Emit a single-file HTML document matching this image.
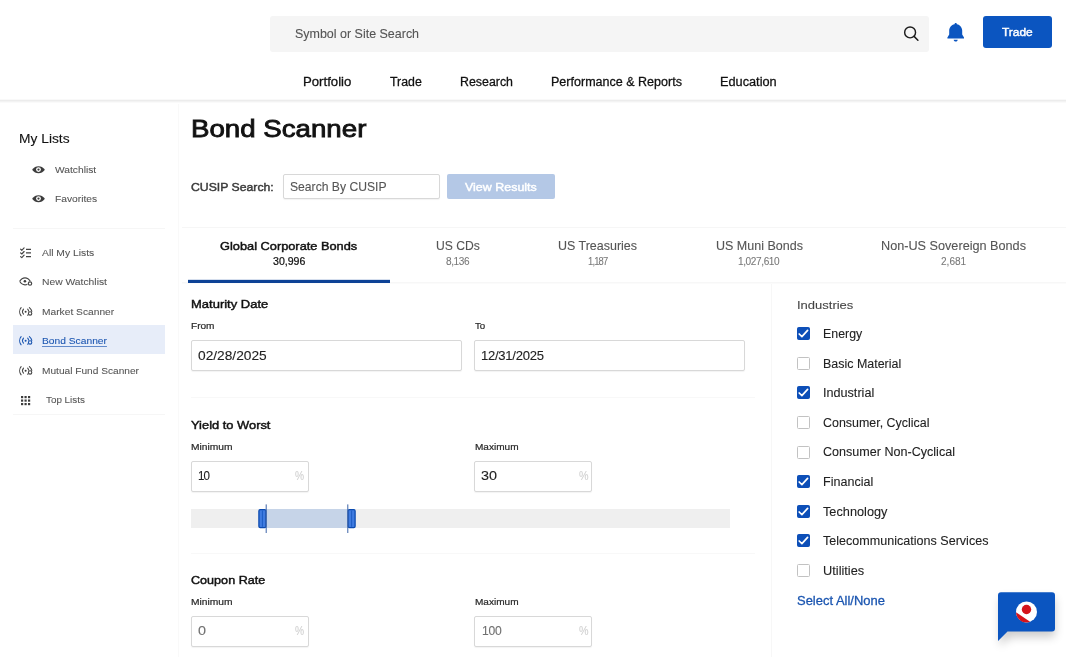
<!DOCTYPE html>
<html lang="en">
<head>
<meta charset="utf-8">
<title>Bond Scanner</title>
<style>
*{box-sizing:border-box;margin:0;padding:0}
html,body{width:1066px;height:657px;overflow:hidden;background:#fff}
body{font-family:"Liberation Sans",sans-serif;color:#111;position:relative}
.a{position:absolute}
.t{position:absolute;white-space:nowrap;line-height:1;transform-origin:0 50%}
svg{position:absolute;overflow:visible}
/* header */
#hdr{left:0;top:99px;width:1066px;height:4px;background:linear-gradient(#f9f9f9 0 25%,#ececec 25% 50%,#f3f3f3 50% 75%,#fafafa 75% 100%)}
#sbar{left:270px;top:16px;width:659px;height:36px;background:#f5f5f5;border-radius:3px}
#tradebtn{left:983px;top:16px;width:69px;height:32px;background:#0b55c0;border-radius:3px}
/* sidebar */
#side{left:0;top:104px;width:179px;height:553px;border-right:1px solid #f9f9f9}
#sel{left:13px;top:325px;width:152px;height:29px;background:#e7edf9}
.sd{left:13px;width:152px;height:1px;background:#f6f6f6}
/* main */
.inp{background:#fff;border:1px solid #d8d8d8;border-radius:2px;box-shadow:0 1px 1px rgba(0,0,0,.05)}
.hr{height:1px;background:#f8f8f8}
.cb{left:797px;width:13px;height:13px;border:1px solid #c2c2c2;border-radius:1.5px;background:#fff}
.cb.on{background:#0d4fb8;border-color:#0d4fb8}
.cb svg{left:-1px;top:-1px}
</style>
</head>
<body>
<!-- HEADER -->
<div class="a" id="hdr"></div>
<div class="a" id="sbar"></div>
<div class="a" id="tradebtn"></div>
<!-- search icon -->
<svg style="left:902px;top:24px" width="20" height="20" viewBox="0 0 20 20"><circle cx="8.1" cy="8.4" r="5.45" fill="none" stroke="#1c1c1c" stroke-width="1.45"/><path d="M12.1 12.4 L15.9 16.2" stroke="#1c1c1c" stroke-width="1.5" stroke-linecap="round"/></svg>
<!-- bell -->
<svg style="left:946px;top:22px" width="20" height="20" viewBox="0 0 20 20"><path d="M9.7 0.9 C10.5 0.9 10.9 1.5 10.9 2.2 C14 2.9 16.2 5.4 16.2 8.6 V12.6 L18 15.4 V16.5 H1.4 V15.4 L3.2 12.6 V8.6 C3.2 5.4 5.4 2.9 8.5 2.2 C8.5 1.5 8.9 0.9 9.7 0.9 Z" fill="#0b55c0"/><path d="M7.7 17.7 H11.7 C11.7 18.8 10.8 19.5 9.7 19.5 C8.6 19.5 7.7 18.8 7.7 17.7 Z" fill="#0b55c0"/></svg>

<!-- SIDEBAR -->
<div class="a" id="side"></div>
<div class="a sd" style="top:228px"></div>
<div class="a" id="sel"></div>
<div class="a sd" style="top:414px"></div>

<!-- eye (filled) x2 -->
<svg style="left:32px;top:165.6px" width="13" height="7.4" viewBox="0 0 13 7.4"><path d="M0.1 3.7 C1.9 1.2 4 0.2 6.5 0.2 C9 0.2 11.1 1.2 12.9 3.7 C11.1 6.2 9 7.2 6.5 7.2 C4 7.2 1.9 6.2 0.1 3.7 Z" fill="#3c3c3c"/><circle cx="6.5" cy="3.6" r="2.45" fill="#fff"/><circle cx="6.5" cy="3.6" r="1.15" fill="#3c3c3c"/></svg>
<svg style="left:32px;top:195.2px" width="13" height="7.4" viewBox="0 0 13 7.4"><path d="M0.1 3.7 C1.9 1.2 4 0.2 6.5 0.2 C9 0.2 11.1 1.2 12.9 3.7 C11.1 6.2 9 7.2 6.5 7.2 C4 7.2 1.9 6.2 0.1 3.7 Z" fill="#3c3c3c"/><circle cx="6.5" cy="3.6" r="2.45" fill="#fff"/><circle cx="6.5" cy="3.6" r="1.15" fill="#3c3c3c"/></svg>
<!-- checklist -->
<svg style="left:20px;top:247px" width="12" height="12" viewBox="0 0 12 12" fill="none" stroke="#444" stroke-width="1.15" stroke-linecap="round" stroke-linejoin="round"><path d="M0.6 2.2 L1.8 3.3 L4.1 0.8 M0.6 5.9 L1.8 7 L4.1 4.5 M0.6 9.6 L1.8 10.7 L4.1 8.2"/><path d="M6 2.3 H11 M6 5.9 H11 M6 9.6 H11" stroke-width="1.3" stroke-linecap="butt"/></svg>
<!-- eye with dot -->
<svg style="left:19px;top:277px" width="14" height="9" viewBox="0 0 14 9" fill="none" stroke="#444" stroke-width="1.15"><path d="M0.7 4.3 C2 2 3.9 0.8 6 0.8 C8.1 0.8 10 2 11.3 4.3 M0.7 4.3 C2 6.6 3.9 7.8 6 7.8 C6.9 7.8 7.7 7.6 8.4 7.2"/><circle cx="5.9" cy="4.3" r="1.3" fill="#3c3c3c" stroke="none"/><circle cx="11" cy="6.5" r="1.7" fill="#fff"/></svg>
<!-- scanner icons -->
<svg style="left:19px;top:306.6px" width="14" height="9.4" viewBox="0 0 14 9.4" fill="none" stroke="#444" stroke-width="1.1" stroke-linecap="round"><path d="M2.1 0.6 C0.2 2.9 0.2 6.5 2.1 8.8 M4.5 2.2 C3.3 3.6 3.3 5.8 4.5 7.2 M8.7 2.2 C9.3 2.9 9.6 3.6 9.7 4.3 M10.4 0.6 C11.8 1.8 12.6 3.1 12.8 4.4 M9 7.8 C8.9 8 8.8 8.1 8.7 8.3"/><circle cx="6.6" cy="4.7" r="1" fill="#3c3c3c" stroke="none"/><circle cx="11.1" cy="6.4" r="1.7" fill="#fff"/></svg>
<svg style="left:19px;top:336.1px" width="14" height="9.4" viewBox="0 0 14 9.4" fill="none" stroke="#1a55b0" stroke-width="1.1" stroke-linecap="round"><path d="M2.1 0.6 C0.2 2.9 0.2 6.5 2.1 8.8 M4.5 2.2 C3.3 3.6 3.3 5.8 4.5 7.2 M8.7 2.2 C9.3 2.9 9.6 3.6 9.7 4.3 M10.4 0.6 C11.8 1.8 12.6 3.1 12.8 4.4 M9 7.8 C8.9 8 8.8 8.1 8.7 8.3"/><circle cx="6.6" cy="4.7" r="1" fill="#1a55b0" stroke="none"/><circle cx="11.1" cy="6.4" r="1.7" fill="#e7edf9"/></svg>
<svg style="left:19px;top:365.7px" width="14" height="9.4" viewBox="0 0 14 9.4" fill="none" stroke="#444" stroke-width="1.1" stroke-linecap="round"><path d="M2.1 0.6 C0.2 2.9 0.2 6.5 2.1 8.8 M4.5 2.2 C3.3 3.6 3.3 5.8 4.5 7.2 M8.7 2.2 C9.3 2.9 9.6 3.6 9.7 4.3 M10.4 0.6 C11.8 1.8 12.6 3.1 12.8 4.4 M9 7.8 C8.9 8 8.8 8.1 8.7 8.3"/><circle cx="6.6" cy="4.7" r="1" fill="#3c3c3c" stroke="none"/><circle cx="11.1" cy="6.4" r="1.7" fill="#fff"/></svg>
<!-- grid -->
<svg style="left:21.2px;top:395.6px" width="9.2" height="9.2" viewBox="0 0 9.2 9.2" fill="#3c3c3c"><rect x="0" y="0" width="2.2" height="2.2"/><rect x="3.5" y="0" width="2.2" height="2.2"/><rect x="7" y="0" width="2.2" height="2.2"/><rect x="0" y="3.5" width="2.2" height="2.2"/><rect x="3.5" y="3.5" width="2.2" height="2.2"/><rect x="7" y="3.5" width="2.2" height="2.2"/><rect x="0" y="7" width="2.2" height="2.2"/><rect x="3.5" y="7" width="2.2" height="2.2"/><rect x="7" y="7" width="2.2" height="2.2"/></svg>


<!-- MAIN -->
<div class="a inp" style="left:283px;top:174px;width:157px;height:25px"></div>
<div class="a" id="vbtn" style="left:447px;top:174px;width:108px;height:25px;background:#b4c8e6;border-radius:2px"></div>

<!-- tabs -->
<div class="a hr" style="left:182px;top:227px;width:884px;background:#f6f6f6"></div>
<div class="a hr" style="left:182px;top:282px;width:884px;height:2px;background:linear-gradient(#f7f7f7 50%,#fbfbfb 50%)"></div>
<div class="a" style="left:188px;top:280px;width:202px;height:3px;background:#0d4296;box-shadow:0 -0.5px 0 rgba(13,66,150,.35)"></div>
<div class="a" style="left:771px;top:284px;width:1px;height:373px;background:#f7f7f7"></div>

<!-- form -->
<div class="a inp" style="left:191px;top:340px;width:271px;height:31px"></div>
<div class="a inp" style="left:474px;top:340px;width:271px;height:31px"></div>
<div class="a hr" style="left:191px;top:396.5px;width:564px"></div>
<div class="a inp" style="left:191px;top:460.5px;width:118px;height:31px"></div>
<div class="a inp" style="left:474px;top:460.5px;width:118px;height:31px"></div>
<!-- slider -->
<div class="a" style="left:191px;top:509px;width:539px;height:19px;background:#efefef"></div>
<div class="a" style="left:266px;top:509px;width:82px;height:19px;background:#c6d4e8"></div>
<svg style="left:255px;top:500px" width="110" height="40" viewBox="0 0 110 40">
<rect x="3.9" y="9.6" width="7" height="18" rx="1.3" fill="#3f7be0" stroke="#0c4bb0" stroke-width="1.3"/>
<path d="M7.4 10.5 V26.8" stroke="#1d5cc4" stroke-width="1"/>
<path d="M11.2 4.4 V33" stroke="#3d64a8" stroke-width="1"/>
<rect x="93.1" y="9.6" width="7" height="18" rx="1.3" fill="#3f7be0" stroke="#0c4bb0" stroke-width="1.3"/>
<path d="M96.6 10.5 V26.8" stroke="#1d5cc4" stroke-width="1"/>
<path d="M92.8 4.4 V33" stroke="#3d64a8" stroke-width="1"/>
</svg>
<div class="a hr" style="left:191px;top:552.5px;width:564px"></div>
<div class="a inp" style="left:191px;top:615.5px;width:118px;height:31px"></div>
<div class="a inp" style="left:474px;top:615.5px;width:118px;height:31px"></div>

<div class="a cb on" style="top:327.1px"><svg width="13" height="13" viewBox="0 0 13 13"><path d="M2.2 7.0 L4.9 9.6 L10.6 3.4" fill="none" stroke="#fff" stroke-width="1.7" stroke-linecap="round" stroke-linejoin="round"/></svg></div>
<div class="a cb" style="top:356.7px"></div>
<div class="a cb on" style="top:386.3px"><svg width="13" height="13" viewBox="0 0 13 13"><path d="M2.2 7.0 L4.9 9.6 L10.6 3.4" fill="none" stroke="#fff" stroke-width="1.7" stroke-linecap="round" stroke-linejoin="round"/></svg></div>
<div class="a cb" style="top:415.9px"></div>
<div class="a cb" style="top:445.5px"></div>
<div class="a cb on" style="top:475.1px"><svg width="13" height="13" viewBox="0 0 13 13"><path d="M2.2 7.0 L4.9 9.6 L10.6 3.4" fill="none" stroke="#fff" stroke-width="1.7" stroke-linecap="round" stroke-linejoin="round"/></svg></div>
<div class="a cb on" style="top:504.7px"><svg width="13" height="13" viewBox="0 0 13 13"><path d="M2.2 7.0 L4.9 9.6 L10.6 3.4" fill="none" stroke="#fff" stroke-width="1.7" stroke-linecap="round" stroke-linejoin="round"/></svg></div>
<div class="a cb on" style="top:534.3px"><svg width="13" height="13" viewBox="0 0 13 13"><path d="M2.2 7.0 L4.9 9.6 L10.6 3.4" fill="none" stroke="#fff" stroke-width="1.7" stroke-linecap="round" stroke-linejoin="round"/></svg></div>
<div class="a cb" style="top:563.9px"></div>

<div class="t" id="stext" style="left:295px;top:28px;font-size:12.15px;color:#555;-webkit-text-stroke:0.10px #555;transform:scaleX(1.0270);">Symbol or Site Search</div>
<div class="t" id="tbtxt" style="left:1002px;top:26px;font-size:11.68px;color:#fff;-webkit-text-stroke:0.44px #fff;transform:scaleX(1.0230);">Trade</div>
<div class="t" id="n0" style="left:303px;top:76px;font-size:12.01px;color:#111;-webkit-text-stroke:0.26px #111;transform:scaleX(1.0973);">Portfolio</div>
<div class="t" id="n1" style="left:390px;top:76px;font-size:12.01px;color:#111;-webkit-text-stroke:0.26px #111;transform:scaleX(1.0275);">Trade</div>
<div class="t" id="n2" style="left:460px;top:76px;font-size:12.01px;color:#111;-webkit-text-stroke:0.26px #111;transform:scaleX(1.0311);">Research</div>
<div class="t" id="n3" style="left:551px;top:76px;font-size:12.01px;color:#111;-webkit-text-stroke:0.26px #111;transform:scaleX(1.0444);">Performance &amp; Reports</div>
<div class="t" id="n4" style="left:720px;top:76px;font-size:12.01px;color:#111;-webkit-text-stroke:0.26px #111;transform:scaleX(1.0616);">Education</div>
<div class="t" id="mylists" style="left:19px;top:133px;font-size:12.85px;color:#111;-webkit-text-stroke:0.10px #111;transform:scaleX(1.0744);">My Lists</div>
<div class="t" id="s1" style="left:55px;top:165px;font-size:9.92px;color:#555;-webkit-text-stroke:0.08px #555;transform:scaleX(1.0344);">Watchlist</div>
<div class="t" id="s2" style="left:55px;top:194px;font-size:9.92px;color:#555;-webkit-text-stroke:0.08px #555;transform:scaleX(1.0356);">Favorites</div>
<div class="t" id="s3" style="left:42px;top:248px;font-size:9.92px;color:#555;-webkit-text-stroke:0.08px #555;transform:scaleX(1.0422);">All My Lists</div>
<div class="t" id="s4" style="left:42px;top:277px;font-size:9.92px;color:#555;-webkit-text-stroke:0.08px #555;transform:scaleX(1.0410);">New Watchlist</div>
<div class="t" id="s5" style="left:42px;top:307px;font-size:9.92px;color:#555;-webkit-text-stroke:0.08px #555;transform:scaleX(1.0324);">Market Scanner</div>
<div class="t" id="s6" style="left:42px;top:336px;font-size:9.92px;color:#1a55b0;-webkit-text-stroke:0.08px #1a55b0;transform:scaleX(1.0343);text-decoration:underline;text-underline-offset:1.5px;text-decoration-thickness:1px;text-decoration-color:rgba(26,85,176,.65);">Bond Scanner</div>
<div class="t" id="s7" style="left:42px;top:366px;font-size:9.92px;color:#555;-webkit-text-stroke:0.08px #555;transform:scaleX(1.0236);">Mutual Fund Scanner</div>
<div class="t" id="s8" style="left:46px;top:395px;font-size:9.92px;color:#555;-webkit-text-stroke:0.08px #555;transform:scaleX(0.9938);">Top Lists</div>
<div class="t" id="title" style="left:191px;top:117px;font-size:24.73px;color:#111;-webkit-text-stroke:0.89px #111;transform:scaleX(1.1192);">Bond Scanner</div>
<div class="t" id="cusip" style="left:191px;top:181px;font-size:11.68px;color:#3a3a3a;-webkit-text-stroke:0.44px #3a3a3a;transform:scaleX(1.0484);">CUSIP Search:</div>
<div class="t" id="cph" style="left:290px;top:181px;font-size:12.11px;color:#555;-webkit-text-stroke:0.10px #555;transform:scaleX(1.0032);">Search By CUSIP</div>
<div class="t" id="vtxt" style="left:465px;top:181px;font-size:11.68px;color:#fff;-webkit-text-stroke:0.44px #fff;transform:scaleX(1.0677);">View Results</div>
<div class="t" id="tb0" style="left:220px;top:240px;font-size:11.68px;color:#111;-webkit-text-stroke:0.44px #111;transform:scaleX(1.0960);">Global Corporate Bonds</div>
<div class="t" id="tc0" style="left:273px;top:257px;font-size:10.06px;color:#111;-webkit-text-stroke:0.22px #111;transform:scaleX(1.0527);">30,996</div>
<div class="t" id="tb1" style="left:436px;top:240px;font-size:12.11px;color:#555;-webkit-text-stroke:0.10px #555;transform:scaleX(1.0017);">US CDs</div>
<div class="t" id="tc1" style="left:446px;top:257px;font-size:10.06px;color:#777;-webkit-text-stroke:0.08px #777;transform:scaleX(0.9998);letter-spacing:-0.40px;">8,136</div>
<div class="t" id="tb2" style="left:558px;top:240px;font-size:12.11px;color:#555;-webkit-text-stroke:0.10px #555;transform:scaleX(1.0299);">US Treasuries</div>
<div class="t" id="tc2" style="left:588px;top:257px;font-size:10.06px;color:#777;-webkit-text-stroke:0.08px #777;transform:scaleX(0.9368);letter-spacing:-0.90px;">1,187</div>
<div class="t" id="tb3" style="left:716px;top:240px;font-size:12.11px;color:#555;-webkit-text-stroke:0.10px #555;transform:scaleX(1.0334);">US Muni Bonds</div>
<div class="t" id="tc3" style="left:738px;top:257px;font-size:10.06px;color:#777;-webkit-text-stroke:0.08px #777;transform:scaleX(1.0046);letter-spacing:-0.40px;">1,027,610</div>
<div class="t" id="tb4" style="left:881px;top:240px;font-size:12.11px;color:#555;-webkit-text-stroke:0.10px #555;transform:scaleX(1.0457);">Non-US Sovereign Bonds</div>
<div class="t" id="tc4" style="left:941px;top:257px;font-size:10.06px;color:#777;-webkit-text-stroke:0.08px #777;transform:scaleX(1.0027);letter-spacing:0.00px;">2,681</div>
<div class="t" id="md" style="left:191px;top:299px;font-size:11.32px;color:#111;-webkit-text-stroke:0.43px #111;transform:scaleX(1.1482);">Maturity Date</div>
<div class="t" id="from" style="left:191px;top:321px;font-size:9.64px;color:#2a2a2a;-webkit-text-stroke:0.21px #2a2a2a;transform:scaleX(1.0469);">From</div>
<div class="t" id="to" style="left:475px;top:321px;font-size:9.64px;color:#2a2a2a;-webkit-text-stroke:0.21px #2a2a2a;transform:scaleX(1.0087);">To</div>
<div class="t" id="d1" style="left:198px;top:350px;font-size:12.11px;color:#222;-webkit-text-stroke:0.10px #222;transform:scaleX(1.1336);">02/28/2025</div>
<div class="t" id="d2" style="left:481px;top:350px;font-size:12.11px;color:#222;-webkit-text-stroke:0.10px #222;transform:scaleX(1.0791);letter-spacing:-0.25px;">12/31/2025</div>
<div class="t" id="ytw" style="left:191px;top:420px;font-size:11.32px;color:#111;-webkit-text-stroke:0.43px #111;transform:scaleX(1.1383);">Yield to Worst</div>
<div class="t" id="min1" style="left:191px;top:442px;font-size:9.64px;color:#2a2a2a;-webkit-text-stroke:0.21px #2a2a2a;transform:scaleX(1.0630);">Minimum</div>
<div class="t" id="max1" style="left:475px;top:442px;font-size:9.64px;color:#2a2a2a;-webkit-text-stroke:0.21px #2a2a2a;transform:scaleX(1.0441);">Maximum</div>
<div class="t" id="v10" style="left:198px;top:470px;font-size:12.11px;color:#222;-webkit-text-stroke:0.10px #222;transform:scaleX(0.9557);letter-spacing:-0.9px;">10</div>
<div class="t" id="v30" style="left:481px;top:470px;font-size:12.11px;color:#222;-webkit-text-stroke:0.10px #222;transform:scaleX(1.1864);">30</div>
<div class="t" id="p1" style="left:295px;top:470px;font-size:12.11px;color:#d0d0d0;-webkit-text-stroke:0.10px #d0d0d0;transform:scaleX(0.8454);">%</div>
<div class="t" id="p2" style="left:579px;top:470px;font-size:12.11px;color:#d0d0d0;-webkit-text-stroke:0.10px #d0d0d0;transform:scaleX(0.8875);">%</div>
<div class="t" id="cr" style="left:191px;top:575px;font-size:11.32px;color:#111;-webkit-text-stroke:0.43px #111;transform:scaleX(1.1137);">Coupon Rate</div>
<div class="t" id="min2" style="left:191px;top:597px;font-size:9.64px;color:#2a2a2a;-webkit-text-stroke:0.21px #2a2a2a;transform:scaleX(1.0630);">Minimum</div>
<div class="t" id="max2" style="left:475px;top:597px;font-size:9.64px;color:#2a2a2a;-webkit-text-stroke:0.21px #2a2a2a;transform:scaleX(1.0441);">Maximum</div>
<div class="t" id="v0" style="left:198px;top:625px;font-size:12.11px;color:#707070;-webkit-text-stroke:0.10px #707070;transform:scaleX(1.1861);">0</div>
<div class="t" id="v100" style="left:482px;top:625px;font-size:12.11px;color:#707070;-webkit-text-stroke:0.10px #707070;transform:scaleX(1.0019);letter-spacing:-0.3px;">100</div>
<div class="t" id="p3" style="left:295px;top:625px;font-size:12.11px;color:#d0d0d0;-webkit-text-stroke:0.10px #d0d0d0;transform:scaleX(0.8454);">%</div>
<div class="t" id="p4" style="left:579px;top:625px;font-size:12.11px;color:#d0d0d0;-webkit-text-stroke:0.10px #d0d0d0;transform:scaleX(0.8875);">%</div>
<div class="t" id="ind" style="left:797px;top:299px;font-size:11.73px;color:#444;-webkit-text-stroke:0.09px #444;transform:scaleX(1.1091);">Industries</div>
<div class="t" id="i0" style="left:823px;top:329px;font-size:11.87px;color:#222;-webkit-text-stroke:0.09px #222;transform:scaleX(1.0432);">Energy</div>
<div class="t" id="i1" style="left:823px;top:359px;font-size:11.87px;color:#222;-webkit-text-stroke:0.09px #222;transform:scaleX(1.0500);">Basic Material</div>
<div class="t" id="i2" style="left:823px;top:388px;font-size:11.87px;color:#222;-webkit-text-stroke:0.09px #222;transform:scaleX(1.0642);">Industrial</div>
<div class="t" id="i3" style="left:823px;top:418px;font-size:11.87px;color:#222;-webkit-text-stroke:0.09px #222;transform:scaleX(1.0488);">Consumer, Cyclical</div>
<div class="t" id="i4" style="left:823px;top:447px;font-size:11.87px;color:#222;-webkit-text-stroke:0.09px #222;transform:scaleX(1.0594);">Consumer Non-Cyclical</div>
<div class="t" id="i5" style="left:823px;top:477px;font-size:11.87px;color:#222;-webkit-text-stroke:0.09px #222;transform:scaleX(1.0578);">Financial</div>
<div class="t" id="i6" style="left:823px;top:507px;font-size:11.87px;color:#222;-webkit-text-stroke:0.09px #222;transform:scaleX(1.0742);">Technology</div>
<div class="t" id="i7" style="left:823px;top:536px;font-size:11.87px;color:#222;-webkit-text-stroke:0.09px #222;transform:scaleX(1.0591);">Telecommunications Services</div>
<div class="t" id="i8" style="left:823px;top:566px;font-size:11.87px;color:#222;-webkit-text-stroke:0.09px #222;transform:scaleX(1.0783);">Utilities</div>
<div class="t" id="selall" style="left:797px;top:596px;font-size:11.87px;color:#1a55b0;-webkit-text-stroke:0.26px #1a55b0;transform:scaleX(1.0934);">Select All/None</div>

<!-- chat widget -->
<svg style="left:980px;top:580px" width="86" height="77" viewBox="0 0 86 77">
<defs><filter id="sh" x="-30%" y="-30%" width="160%" height="170%"><feGaussianBlur stdDeviation="5"/></filter></defs>
<path d="M21 16 H72 a3 3 0 0 1 3 3 V52 a3 3 0 0 1 -3 3 H30 L20 64 V19 a3 3 0 0 1 3 -3 Z" fill="#000" opacity=".2" filter="url(#sh)" transform="translate(0,2)"/>
<path d="M21 12.2 H72 a3 3 0 0 1 3 3 V48.6 a3 3 0 0 1 -3 3 H27.5 L18 60.9 V15.2 a3 3 0 0 1 3 -3 Z" fill="#0b55c0"/>
<circle cx="46.5" cy="31.9" r="10.5" fill="#fff"/>
<path d="M36.0 32.3 L50.1 41.8 A10.5 10.5 0 0 1 36.0 32.3 Z" fill="#d5141b"/>
<circle cx="46.5" cy="29.5" r="4.7" fill="#d5141b"/>
</svg>
</body>
</html>
